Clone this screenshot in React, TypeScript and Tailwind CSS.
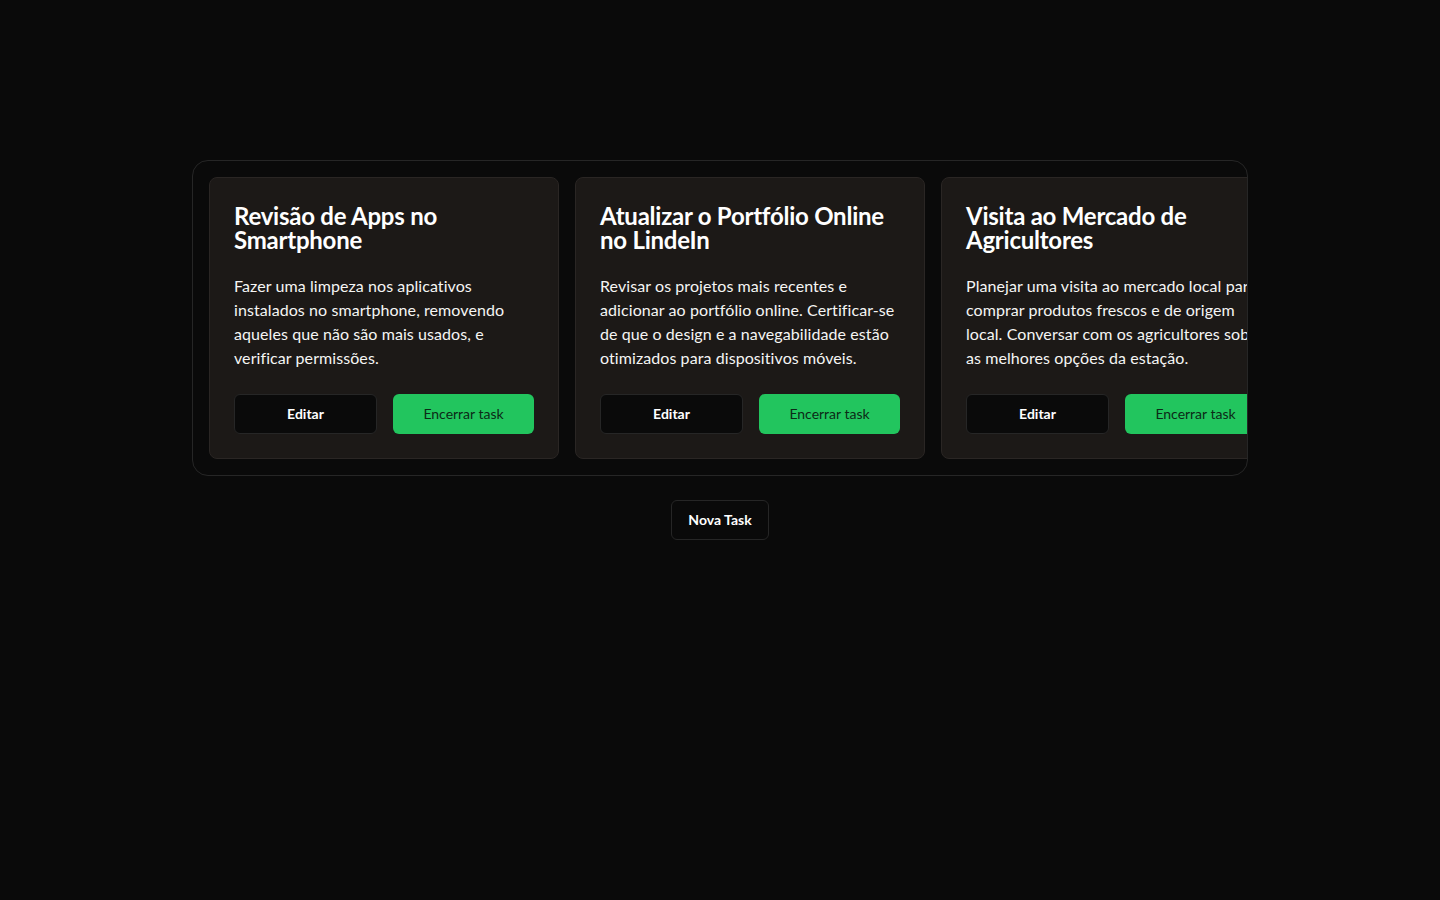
import React from "react";

interface Task {
  id: number;
  title: string;
  desc: string;
}

const tasks: Task[] = [
  {
    id: 1,
    title: "Revisão de Apps no Smartphone",
    desc: "Fazer uma limpeza nos aplicativos instalados no smartphone, removendo aqueles que não são mais usados, e verificar permissões.",
  },
  {
    id: 2,
    title: "Atualizar o Portfólio Online no LindeIn",
    desc: "Revisar os projetos mais recentes e adicionar ao portfólio online. Certificar-se de que o design e a navegabilidade estão otimizados para dispositivos móveis.",
  },
  {
    id: 3,
    title: "Visita ao Mercado de Agricultores",
    desc: "Planejar uma visita ao mercado local para comprar produtos frescos e de origem local. Conversar com os agricultores sobre as melhores opções da estação.",
  },
];

export default function App() {
  return (
    <div className="min-h-screen w-full bg-[#0a0a0a] text-white font-['Lato','Open_Sans',sans-serif] flex flex-col items-center pt-40">
      <div className="w-full max-w-[1056px] rounded-2xl border border-[#262626] p-4 overflow-hidden">
        <div className="flex gap-4">
          {tasks.map((task) => (
            <div
              key={task.id}
              className="flex-none w-[350px] rounded-lg border border-[#2a2624] bg-[#1c1917] p-6 flex flex-col"
            >
              <h2 className="mt-0.5 text-2xl font-bold leading-6 tracking-[-0.01em]">{task.title}</h2>
              <p className="mt-[22px] text-base leading-6 tracking-[0.005em] text-[#f5f5f4]">{task.desc}</p>
              <div className="mt-6 flex gap-4">
                <button className="flex-1 h-10 rounded-md border border-[#262626] bg-[#0a0a0a] text-sm font-bold">
                  Editar
                </button>
                <button className="flex-1 h-10 rounded-md bg-[#22c55e] text-sm text-[#0c2a17]">
                  Encerrar task
                </button>
              </div>
            </div>
          ))}
        </div>
      </div>
      <button className="mt-6 h-10 px-4 rounded-md border border-[#262626] bg-[#0a0a0a] text-sm font-bold">
        Nova Task
      </button>
    </div>
  );
}
